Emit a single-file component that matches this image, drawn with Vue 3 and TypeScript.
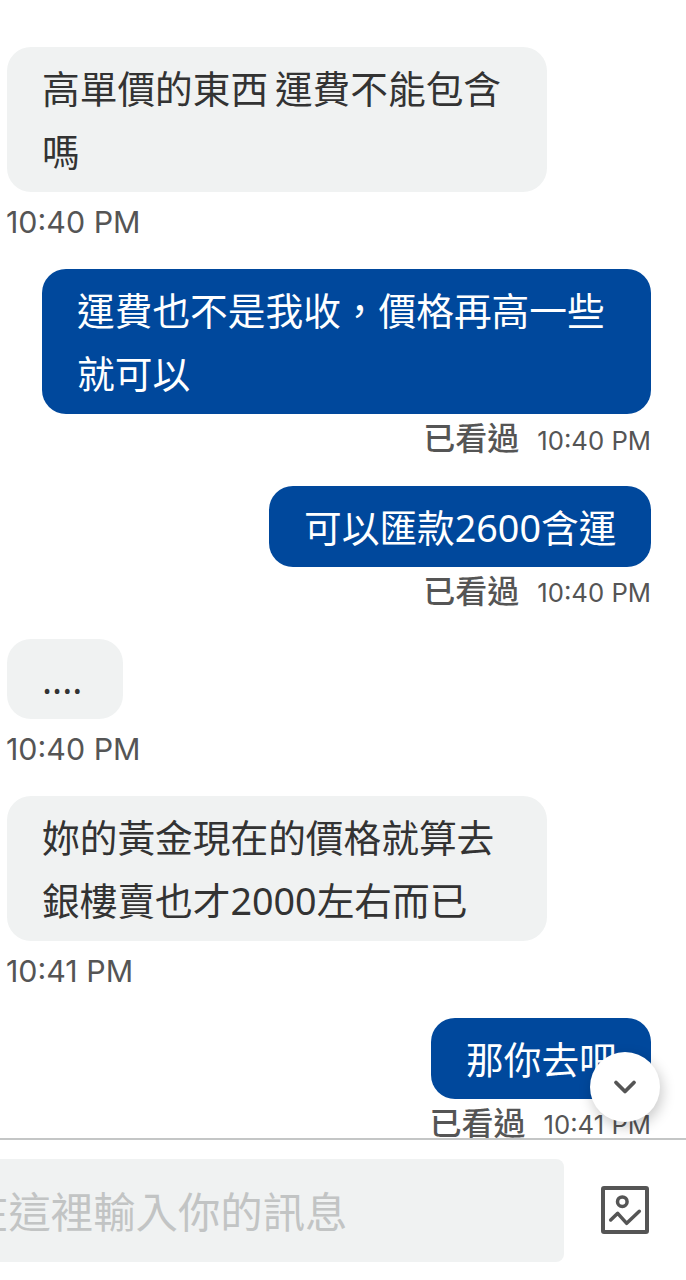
<template>
  <div class="chat">
    <div class="messages">
      <div v-for="m in messages" :key="m.id" class="msg" :class="m.mine ? 'mine' : 'theirs'">
        <div class="bubble" :class="{ multi: m.text.includes('\n') }" :style="{ width: m.width + 'px' }">{{ m.text }}</div>
        <div class="meta">
          <span v-if="m.mine" class="seen">已看過</span>
          <span class="time">{{ m.time }}</span>
        </div>
      </div>
    </div>

    <div class="composer">
      <div class="input">在這裡輸入你的訊息</div>
      <svg class="attach" width="48" height="48" viewBox="0 0 48 48" fill="none" stroke="#555" stroke-width="4">
        <rect x="2" y="2" width="44" height="44" rx="1" />
        <circle cx="21.3" cy="15.7" r="4.8" stroke-width="3.5" />
        <path d="M9.7 34 L16.7 27.3 L25.7 37.3 L38.3 25.3" stroke-width="3.5" stroke-linecap="round" stroke-linejoin="round" />
      </svg>
    </div>

    <button class="to-bottom">
      <svg width="24" height="16" viewBox="0 0 24 16" fill="none" stroke="#555" stroke-width="3.8" stroke-linecap="round" stroke-linejoin="round">
        <path d="M3 3.5 L12 12.5 L21 3.5" />
      </svg>
    </button>
  </div>
</template>

<script setup lang="ts">
interface Message {
  id: number
  text: string
  time: string
  mine: boolean
  width: number
}

const messages: Message[] = [
  { id: 1, text: '高單價的東西 運費不能包含\n嗎', time: '10:40 PM', mine: false, width: 540 },
  { id: 2, text: '運費也不是我收\uFF0C價格再高一些\n就可以', time: '10:40 PM', mine: true, width: 609 },
  { id: 3, text: '可以匯款2600含運', time: '10:40 PM', mine: true, width: 382 },
  { id: 4, text: '....', time: '10:40 PM', mine: false, width: 116 },
  { id: 5, text: '妳的黃金現在的價格就算去\n銀樓賣也才2000左右而已', time: '10:41 PM', mine: false, width: 540 },
  { id: 6, text: '那你去吧', time: '10:41 PM', mine: true, width: 220 },
]
</script>

<style>
html,
body {
  background: #fff;
}
</style>

<style scoped>
.chat {
  position: relative;
  width: 686px;
  height: 1280px;
  overflow: hidden;
  display: flex;
  flex-direction: column;
  background: #fff;
  font-family: "Noto Sans", "Noto Sans CJK TC", sans-serif;
}
.messages {
  flex: none;
  height: 1138px;
  padding: 47px 35px 0 7px;
  box-sizing: border-box;
  display: flex;
  flex-direction: column;
  overflow: hidden;
}
.msg {
  flex: none;
  display: flex;
  flex-direction: column;
}
.msg.mine {
  align-items: flex-end;
  margin-bottom: 20px;
}
.msg.theirs {
  align-items: flex-start;
  margin-bottom: 17px;
}
.bubble {
  box-sizing: border-box;
  padding: 9.5px 35px 8px;
  font-size: 37.7px;
  line-height: 63px;
  word-spacing: -3px;
  border-radius: 24px;
  white-space: pre;
}
.bubble.multi {
  padding-bottom: 9.5px;
}
.theirs .bubble {
  background: #f0f2f2;
  color: #333;
}
.mine .bubble {
  background: #00489c;
  color: #fff;
}
.meta {
  display: flex;
  align-items: center;
  color: #555;
}
.mine .meta {
  height: 52px;
}
.theirs .meta {
  height: 60px;
}
.seen {
  font-size: 32px;
  font-weight: 500;
  margin-right: 18px;
  line-height: 46px;
  margin-top: -4px;
}
.time {
  font-family: "Inter", sans-serif;
}
.mine .time {
  font-size: 25.7px;
}
.theirs .time {
  font-size: 30.4px;
  margin-left: -1px;
}
.composer {
  flex: none;
  height: 142px;
  border-top: 2px solid #c4c6c6;
  box-sizing: border-box;
  display: flex;
  align-items: flex-start;
  padding-top: 19px;
  padding-right: 37px;
}
.input {
  width: 604px;
  height: 103px;
  margin-left: -40px;
  margin-right: 37px;
  padding-left: 6px;
  box-sizing: border-box;
  flex: none;
  background: #f0f2f2;
  border-radius: 8px;
  color: #c2c4c4;
  font-size: 42.4px;
  line-height: 105px;
  white-space: nowrap;
}
.attach {
  flex: none;
  margin-top: 27px;
}
.to-bottom {
  position: absolute;
  left: 590px;
  top: 1052px;
  width: 70px;
  height: 70px;
  padding: 0;
  border: none;
  border-radius: 50%;
  background: #fff;
  box-shadow: 2px 5px 14px rgba(0, 0, 0, 0.22);
  display: flex;
  align-items: center;
  justify-content: center;
}
</style>
